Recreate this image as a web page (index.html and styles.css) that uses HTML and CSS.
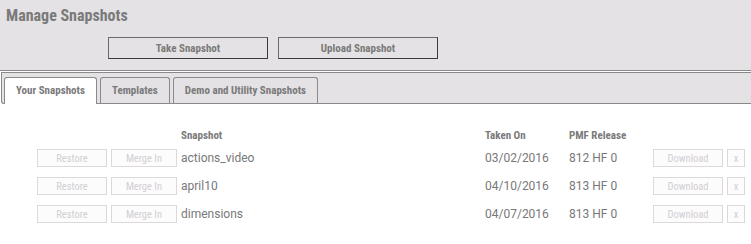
FILE: index.html
```html
<!DOCTYPE html>
<html>
<head>
<meta charset="utf-8">
<title>Manage Snapshots</title>
<link rel="stylesheet" href="styles.css">
</head>
<body>
<div class="top">
  <h1 class="title">Manage Snapshots</h1>
  <div class="actions">
    <button class="btn">Take Snapshot</button>
    <button class="btn">Upload Snapshot</button>
  </div>
</div>
<div class="tabbar">
  <div class="tab active">Your Snapshots</div>
  <div class="tab">Templates</div>
  <div class="tab">Demo and Utility Snapshots</div>
</div>
<div class="content">
  <div class="grid">
    <div class="th c-name">Snapshot</div>
    <div class="th">Taken On</div>
    <div class="th">PMF Release</div>
    <div class="th"></div>
    <div class="th"></div>

    <button class="dbtn">Restore</button>
    <button class="dbtn">Merge In</button>
    <div class="td">actions_video</div>
    <div class="td">03/02/2016</div>
    <div class="td">812 HF 0</div>
    <button class="dbtn">Download</button>
    <button class="dbtn">x</button>

    <button class="dbtn">Restore</button>
    <button class="dbtn">Merge In</button>
    <div class="td">april10</div>
    <div class="td">04/10/2016</div>
    <div class="td">813 HF 0</div>
    <button class="dbtn">Download</button>
    <button class="dbtn">x</button>

    <button class="dbtn">Restore</button>
    <button class="dbtn">Merge In</button>
    <div class="td">dimensions</div>
    <div class="td">04/07/2016</div>
    <div class="td">813 HF 0</div>
    <button class="dbtn">Download</button>
    <button class="dbtn">x</button>
  </div>
</div>
</body>
</html>
```
FILE: styles.css
```css
html, body {
  margin: 0;
  padding: 0;
  background: #ffffff;
}
body {
  font-family: Roboto, "Liberation Sans", sans-serif;
  color: #787878;
  width: 751px;
  height: 244px;
  overflow: hidden;
}
.top {
  background: #e4e2e4;
  padding: 6px 0 11px 6px;
  border-bottom: 1px solid #8a8a8a;
}
.title {
  margin: 0;
  font-family: "Roboto Condensed", Roboto, sans-serif;
  font-weight: bold;
  font-size: 16px;
  line-height: 20px;
  color: #7a7a7a;
}
.actions {
  display: flex;
  gap: 10px;
  margin: 11px 0 0 102px;
}
.btn {
  width: 160px;
  height: 22px;
  padding: 0;
  margin: 0;
  background: #e4e2e4;
  border: 1px solid;
  border-color: #6a6a6a #3a3a3a #3a3a3a #6a6a6a;
  font-family: "Roboto Condensed", Roboto, sans-serif;
  font-weight: bold;
  font-size: 11px;
  color: #7a7a7a;
}
.tabbar {
  margin: 1px 0 0 1px;
  background: #e4e2e4;
  border: 1px solid #8a8a8a;
  border-right: none;
  border-bottom-left-radius: 3px;
  padding: 4px 0 0 2px;
  display: flex;
  gap: 3px;
  height: 26px;
}
.tab {
  height: 25px;
  line-height: 25px;
  padding: 0 11px;
  border: 1px solid #8a8a8a;
  border-bottom: none;
  border-radius: 3px 3px 0 0;
  background: #e4e2e4;
  font-family: "Roboto Condensed", Roboto, sans-serif;
  font-weight: bold;
  font-size: 11px;
  color: #7a7a7a;
}
.tab.active {
  background: #ffffff;
  height: 26px;
  margin-bottom: -1px;
}
.content {
  padding: 25px 0 0 37px;
}
.grid {
  display: grid;
  grid-template-columns: 70px 66px 300px 80px 80px 70px 18px;
  column-gap: 4px;
  row-gap: 10px;
}
.th {
  font-family: "Roboto Condensed", Roboto, sans-serif;
  font-weight: bold;
  font-size: 11px;
  line-height: 14px;
  margin-bottom: -4px;
  color: #7a7a7a;
}
.c-name {
  grid-column: 3;
}
.td {
  font-size: 12px;
  line-height: 18px;
  color: #787878;
  white-space: nowrap;
}
.dbtn {
  height: 18px;
  padding: 0;
  margin: 0;
  background: #fdfcfd;
  border: 1px solid #dcd8dc;
  font-family: "Roboto Condensed", Roboto, sans-serif;
  font-size: 10.5px;
  color: #d2ced2;
}
```
